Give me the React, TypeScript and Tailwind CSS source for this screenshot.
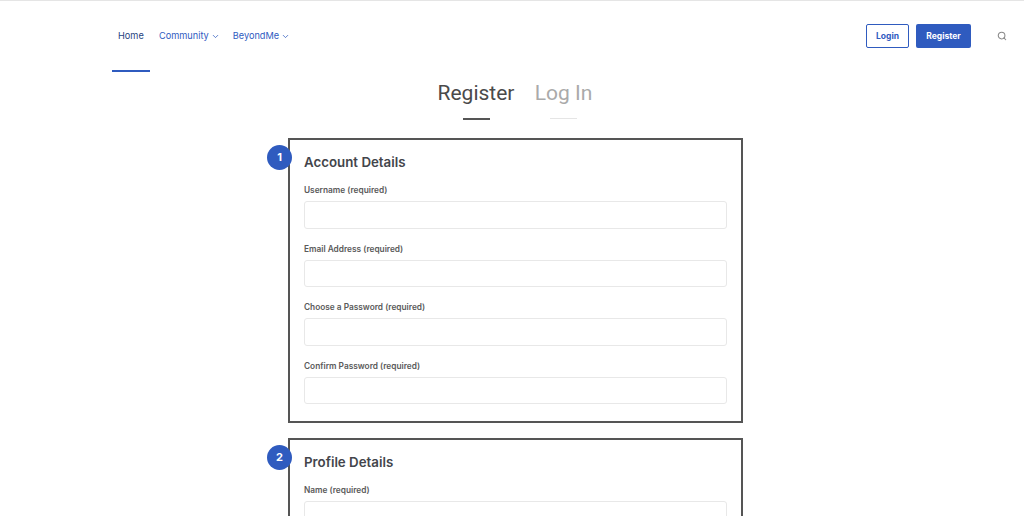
import { ChevronDown, Search } from "lucide-react";

const accountFields = [
  "Username (required)",
  "Email Address (required)",
  "Choose a Password (required)",
  "Confirm Password (required)",
];

function Field({ label }: { label: string }) {
  return (
    <div className="mb-[13.17px]">
      <label className="block text-[8.3px] leading-[14px] font-semibold text-[#5a5a5a] mb-[4px]">{label}</label>
      <div className="h-[27.5px] w-full rounded-[3px] border border-[#e8e8e8] bg-white" />
    </div>
  );
}

function Section({ num, title, fields, className }: { num: number; title: string; fields: string[]; className?: string }) {
  return (
    <div className={"relative border-2 border-[#555] w-[455px] ml-[288px] pl-[14px] pr-[14px] pt-[13px] " + (className ?? "")}>
      <div className="absolute left-[-23px] top-[5px] w-[25px] h-[25px] rounded-full bg-[#2f5bbf] flex items-center justify-center text-white text-[11px] font-bold">
        {num}
      </div>
      <h2 className="text-[13.3px] leading-[18px] font-semibold text-[#43454b] mb-[12px]">{title}</h2>
      {fields.map((f) => (
        <Field key={f} label={f} />
      ))}
    </div>
  );
}

export default function App() {
  return (
    <div className="w-[1024px] h-[516px] overflow-hidden bg-white border-t border-[#e5e5e5] font-['Inter',sans-serif]">
      <header className="flex h-[71px] items-start pl-[112px] pr-[17px]">
        <nav className="flex text-[9.2px] leading-[14px] pt-[28px] h-[71px]">
          <a className="w-[38px] h-[43px] border-b-2 border-[#2f5bbf] pl-[6px] text-[#27447f]">Home</a>
          <a className="ml-[9px] flex items-start h-[14px] text-[#2f5bbf]">
            Community
            <ChevronDown className="w-[9px] h-[9px] ml-[2px] mt-[3px]" />
          </a>
          <a className="ml-[13px] flex items-start h-[14px] text-[#2f5bbf]">
            BeyondMe
            <ChevronDown className="w-[9px] h-[9px] ml-[2px] mt-[3px]" />
          </a>
        </nav>
        <div className="ml-auto flex items-center pt-[23px]">
          <button className="w-[43px] h-[24px] rounded-[2px] border border-[#2f5bbf] text-[#2f5bbf] text-[8.5px] font-bold">Login</button>
          <button className="ml-[7px] w-[55px] h-[24px] rounded-[2px] bg-[#2f5bbf] text-white text-[8.5px] font-bold">Register</button>
          <Search className="ml-[26px] w-[10px] h-[10px] text-[#888]" strokeWidth={2.5} />
        </div>
      </header>
      <div className="flex justify-center pl-[6px] text-[21px] leading-[32px] h-[66px] pt-[5px] font-['Roboto',sans-serif]">
        <div className="w-[77px] flex flex-col items-center text-[#4a4a4a]">
          Register
          <span className="mt-[9px] w-[27px] h-[2px] bg-[#555]" />
        </div>
        <div className="ml-[20px] w-[58px] flex flex-col items-center text-[#aaa]">
          Log In
          <span className="mt-[9px] w-[27px] h-[1px] bg-[#e5e5e5]" />
        </div>
      </div>
      <Section num={1} title="Account Details" fields={accountFields} className="h-[285px]" />
      <Section num={2} title="Profile Details" fields={["Name (required)"]} className="mt-[15px] h-[120px]" />
    </div>
  );
}
